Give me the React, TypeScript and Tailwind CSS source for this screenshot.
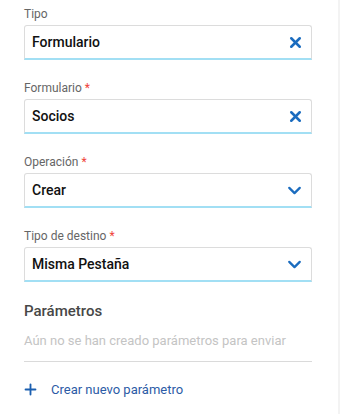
import { ChevronDown, Plus, X } from "lucide-react";

type FieldProps = {
  label: string;
  value: string;
  required?: boolean;
  kind: "clear" | "select";
};

const Field = ({ label, value, required, kind }: FieldProps) => {
  return (
    <div className="flex flex-col">
      <div className="text-[12px] leading-4 text-[#666] mb-[3px]">
        {label}
        {required ? <span className="text-[#f0433a] ml-[3px]">*</span> : null}
      </div>
      <div className="h-[35px] flex items-center justify-between pl-[7px] pr-[7px] border border-[#dcdcdc] border-b-2 border-b-[#a2dff4] rounded-t-[3px] bg-white">
        <span className="text-[14px] font-medium text-[#111]">{value}</span>
        {kind === "clear" ? (
          <X size={17} strokeWidth={3.6} className="text-[#1b6cbf]" />
        ) : (
          <ChevronDown size={21} strokeWidth={2.6} className="text-[#1b6cbf] -mr-[1px]" />
        )}
      </div>
    </div>
  );
};

const App = () => {
  return (
    <div className="w-[340px] h-[414px] bg-white flex font-['Roboto',sans-serif]">
      <div className="flex-1 pl-6 pr-[26px] pt-[6px]">
        <div className="flex flex-col gap-5">
          <Field label="Tipo" value="Formulario" kind="clear" />
          <Field label="Formulario" value="Socios" required kind="clear" />
          <Field label="Operación" value="Crear" required kind="select" />
          <Field label="Tipo de destino" value="Misma Pestaña" required kind="select" />
        </div>
        <div className="mt-[19px] text-[15px] leading-5 font-medium text-[#474747]">
          Parámetros
        </div>
        <div className="mt-3 text-[13px] leading-4 text-[#c4c4c4]">
          Aún no se han creado parámetros para enviar
        </div>
        <div className="mt-3 h-px bg-[#dadada]" />
        <button className="mt-[19px] flex items-center text-[13px] leading-4 text-[#2c5ba6]">
          <Plus size={17} strokeWidth={2.6} className="text-[#1b5fb0] -ml-[2px]" />
          <span className="ml-[12px]">Crear nuevo parámetro</span>
        </button>
      </div>
      <div className="w-[2px] bg-[#f3f3f3]" />
    </div>
  );
};

export default App;
